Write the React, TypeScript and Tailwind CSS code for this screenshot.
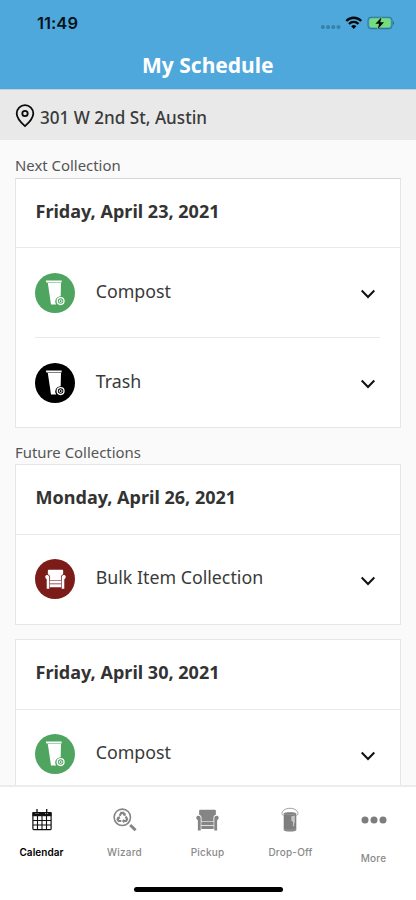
import type { ReactNode } from "react";
import clsx from "clsx";

type ItemKind = "compost" | "trash" | "bulk";

type Pickup = {
  kind: ItemKind;
  label: string;
};

const ITEM_COLORS: Record<ItemKind, string> = {
  compost: "bg-[#4fa55f]",
  trash: "bg-black",
  bulk: "bg-[#7b1c18]",
};

export default function App() {
  return (
    <div className="flex h-[900px] w-[416px] flex-col overflow-hidden bg-[#fafafa] font-['Noto_Sans',sans-serif] whitespace-nowrap text-[#3a3a3a]">
      <Header />
      <AddressBar />

      <main className="min-h-0 flex-1 overflow-hidden px-[15px] pt-[15px]">
        <SectionLabel className="h-[23px]">Next Collection</SectionLabel>
        <ScheduleCard
          date="Friday, April 23, 2021"
          className="border-t-[#d8d8d9]"
          headClassName="h-[69px]"
          items={[
            { kind: "compost", label: "Compost" },
            { kind: "trash", label: "Trash" },
          ]}
        />

        <SectionLabel className="mt-[14px] h-[22px]">Future Collections</SectionLabel>
        <ScheduleCard
          date="Monday, April 26, 2021"
          headClassName="h-[70px]"
          rowClassName="pb-px"
          items={[{ kind: "bulk", label: "Bulk Item Collection" }]}
        />
        <ScheduleCard
          date="Friday, April 30, 2021"
          className="mt-[14px]"
          headClassName="h-[70px]"
          rowClassName="pb-px"
          items={[{ kind: "compost", label: "Compost" }]}
        />
      </main>

      <TabBar />
    </div>
  );
}

function Header() {
  return (
    <header className="h-[89px] shrink-0 bg-[#4fa8dc]">
      <div className="flex h-[46px] items-center justify-between pr-[22px] pl-[37px]">
        <span className="font-['Inter',sans-serif] text-[16.5px] font-semibold tracking-[0.05px] text-[#08131a]">
          11:49
        </span>
        <StatusIcons />
      </div>
      <h1 className="pl-[142px] text-[21px] leading-[38px] font-bold text-white">
        My Schedule
      </h1>
    </header>
  );
}

function StatusIcons() {
  return (
    <svg width="74" height="16" viewBox="320 15 74 16" fill="none">
      <g fill="#3781aa">
        <rect x="321" y="25.3" width="3.8" height="3.6" rx="1.4" />
        <rect x="326.2" y="25.3" width="3.8" height="3.6" rx="1.4" />
        <rect x="331.4" y="25.3" width="3.8" height="3.6" rx="1.4" />
        <rect x="336.6" y="25.3" width="3.8" height="3.6" rx="1.4" />
      </g>
      <g stroke="#02080c" strokeWidth="2.3">
        <path d="M346.3 21a10.2 10.2 0 0 1 14.9 0" />
        <path d="M349 24a6.5 6.5 0 0 1 9.5 0" />
      </g>
      <path
        d="M353.75 28.9l-2.6-2.7a3.8 3.8 0 0 1 5.2 0z"
        fill="#02080c"
      />
      <rect x="368" y="17.2" width="24" height="11.4" rx="3.4" stroke="#2f7a8e" strokeWidth="1.1" />
      <rect x="369.4" y="18.6" width="21.2" height="8.6" rx="2.1" fill="#77dd76" />
      <path d="M393 21v4c1.3-.6 1.3-3.4 0-4z" fill="#2a6687" />
      <path
        d="M381.6 17.2l-6.2 6.5h3.7l-1.4 5.5 6.3-6.9h-3.8z"
        fill="#02080c"
        stroke="#77dd76"
        strokeWidth="1"
        paintOrder="stroke"
      />
    </svg>
  );
}

function AddressBar() {
  return (
    <div className="flex h-[51px] shrink-0 items-center gap-[5px] border-t border-[#c3d0d7] bg-[#e9e9e9] pt-1 pl-[15px]">
      <svg width="20" height="24" viewBox="0 0 20 24" fill="none" stroke="#0b0b0b" strokeWidth="1.8" className="-mt-0.5">
        <path d="M10 22.1C7.4 19.8 1.7 14.4 1.7 9.4a8.3 8.3 0 0 1 16.6 0c0 5-5.7 10.4-8.3 12.7z" />
        <circle cx="10" cy="9.5" r="2.7" />
      </svg>
      <span className="pt-px text-[17.1px] font-medium">301 W 2nd St, Austin</span>
    </div>
  );
}

function SectionLabel({
  children,
  className,
}: {
  children: ReactNode;
  className?: string;
}) {
  return (
    <h2 className={clsx("text-[14.9px] leading-[20px] text-[#555]", className)}>
      {children}
    </h2>
  );
}

function ScheduleCard({
  date,
  items,
  className,
  headClassName,
  rowClassName,
}: {
  date: string;
  items: Pickup[];
  className?: string;
  headClassName: string;
  rowClassName?: string;
}) {
  return (
    <section className={clsx("border border-[#e6e6e8] bg-white", className)}>
      <h3
        className={clsx(
          "flex items-center border-b border-[#e9e9eb] pb-[3px] pl-[19.5px] text-[18.05px] font-bold text-[#333]",
          headClassName,
        )}
      >
        {date}
      </h3>
      <ul className="pr-5 pl-[19px]">
        {items.map((item) => (
          <li
            key={item.label}
            className={clsx(
              "flex h-[90px] items-center border-b border-[#e9e9e9] last:h-[89px] last:border-b-0",
              rowClassName,
            )}
          >
            <span
              className={clsx(
                "h-10 w-10 shrink-0 rounded-full",
                ITEM_COLORS[item.kind],
              )}
            >
              {item.kind === "bulk" ? (
                <Armchair className="mx-[9.5px] mt-[10px] h-[21px] w-[21px] text-white" />
              ) : (
                <Bin />
              )}
            </span>
            <span className="-mt-[3px] ml-[20.7px] text-[17.8px]">{item.label}</span>
            <svg width="16" height="10" viewBox="0 0 16 10" className="mt-[3px] mr-1 ml-auto">
              <path d="M1.7 1.5L8 8l6.3-6.5" fill="none" stroke="#111" strokeWidth="2" />
            </svg>
          </li>
        ))}
      </ul>
    </section>
  );
}

function Bin() {
  return (
    <svg viewBox="0 0 40 40" fill="none">
      <path d="M10.8 7.6h15.8v2H11.4z" fill="#fff" />
      <path d="M12.8 10.1H26l-.3 13.2a5.1 5.1 0 0 0-4.5 8.1H16z" fill="#fff" />
      <circle cx="25.6" cy="28.1" r="3.4" stroke="#fff" strokeWidth="1.3" />
      <circle cx="25.6" cy="28.1" r="1.4" stroke="#fff" strokeWidth=".9" />
    </svg>
  );
}

function Armchair({ className }: { className?: string }) {
  return (
    <svg viewBox="0 0 22 22" fill="currentColor" className={className}>
      <path d="M3 5.4V1.6C3 1 3.5.7 4.2.7h13.6c.7 0 1.2.3 1.2.9v3.8c-1.6.5-2.4 1.8-2.3 3.4v2.9H5.3V8.8C5.4 7.2 4.6 5.9 3 5.4z" />
      <path d="M.3 8.2c0-2.5 4.2-2.5 4.2.5v11.9H1.8v-9.9C.8 10.3.3 9.4.3 8.2zM21.7 8.2c0-2.5-4.2-2.5-4.2.5v11.9h2.7v-9.9c1-.4 1.5-1.3 1.5-2.5z" />
      <path d="M5.1 12.3h11.8v3H5.1zM5.1 16h11.8v3.2H5.1z" />
    </svg>
  );
}

function CalendarIcon() {
  return (
    <svg width="22" height="24" viewBox="0 0 22 24" fill="none">
      <path d="M1.5 4h19v4.2h-19z" fill="#111" />
      <path d="M6 1.3v4.4M15.7 1.3v4.4" stroke="#fff" strokeWidth="2.8" />
      <path d="M6 1v5.2M15.7 1v5.2" stroke="#111" strokeWidth="1.3" />
      <rect x="1.9" y="4.5" width="18.2" height="17.2" rx="1" stroke="#111" strokeWidth="1.2" />
      <path d="M2 12.5h18M2 17h18M6.5 8v13.5M11 8v13.5M15.5 8v13.5" stroke="#111" strokeWidth="1.1" />
    </svg>
  );
}

function WizardIcon() {
  return (
    <svg width="24" height="24" viewBox="0 0 24 24" fill="none" stroke="#858585">
      <circle cx="9.3" cy="9.3" r="8.2" strokeWidth="1.6" />
      <path d="M17.2 17l5.4 5.3" strokeWidth="3" />
      <g strokeWidth="2.2">
        <path d="M6.6 7.8l1.7-2.9h2.1l1 1.8" />
        <path d="M12.7 8.6l1.4 2.6-1 1.8h-2.4" />
        <path d="M8.3 13H5.6l-1-1.8 1.1-1.8" />
      </g>
      <path d="M12.9 5l-.4 3.3-2.9-1.4zM11.2 10.8v4.4L8.9 13zM3.7 9.4l3-1.3.5 3z" fill="#858585" stroke="none" />
    </svg>
  );
}

function BucketIcon() {
  return (
    <svg width="18" height="26" viewBox="0 0 18 26" fill="none" className="mr-px">
      <path d="M2.4 8.7C-1 6.3 2.2 1.3 9 1.3s10 5 6.6 7.4" stroke="#a2a2a2" strokeWidth="1" />
      <path d="M2.7 6.4c0-1.6 12.6-1.6 12.6 0v16.9c-1.1 1.7-11.5 1.7-12.6 0z" fill="#7e7e7e" />
      <path d="M3 6.7c2 1.2 10 1.2 12 0" stroke="#a1a1a1" strokeWidth=".7" />
      <path d="M10.3 9.2c1.4 0 2.7-.3 3.6-.7v7.1c-.7.2-.7 1.5-.8 3.7-.7.5-1.2.1-1.2-.5v-4.1c-.5-.8-1.5-.2-1.6-1.3z" fill="#c4c4c4" />
      <path d="M3.1 22.1c1.7 1.4 10.1 1.4 11.8 0" stroke="#a5a5a5" strokeWidth=".6" />
    </svg>
  );
}

function MoreIcon() {
  return (
    <svg width="26" height="8" viewBox="0 0 26 8" fill="#7d7d7d">
      <circle cx="4" cy="4" r="3.5" />
      <circle cx="13" cy="4" r="3.5" />
      <circle cx="22" cy="4" r="3.5" />
    </svg>
  );
}

function TabBar() {
  return (
    <nav className="flex h-[115px] shrink-0 flex-col border-t-2 border-[#ececec] bg-white font-['Inter',sans-serif]">
      <div className="grid h-[100px] w-[415px] grid-cols-5">
        <Tab label="Calendar" icon={<CalendarIcon />} active />
        <Tab label="Wizard" icon={<WizardIcon />} />
        <Tab label="Pickup" icon={<Armchair className="h-[23px] w-[23px] text-[#858585]" />} />
        <Tab label="Drop-Off" icon={<BucketIcon />} />
        <Tab label="More" icon={<MoreIcon />} labelClassName="mt-3" />
      </div>
      <div className="mx-auto h-[5px] w-[149px] rounded-full bg-black" />
    </nav>
  );
}

function Tab({
  label,
  icon,
  active,
  labelClassName = "mt-1.5",
}: {
  label: string;
  icon: ReactNode;
  active?: boolean;
  labelClassName?: string;
}) {
  return (
    <div className="flex flex-col items-center pt-5">
      <div className="flex h-[26px] items-center">{icon}</div>
      <span
        className={clsx(
          "text-[10px] leading-[26px]",
          active
            ? "font-semibold tracking-[0.05px] text-black"
            : "font-medium tracking-[0.2px] text-[#8a8a8a]",
          labelClassName,
        )}
      >
        {label}
      </span>
    </div>
  );
}
